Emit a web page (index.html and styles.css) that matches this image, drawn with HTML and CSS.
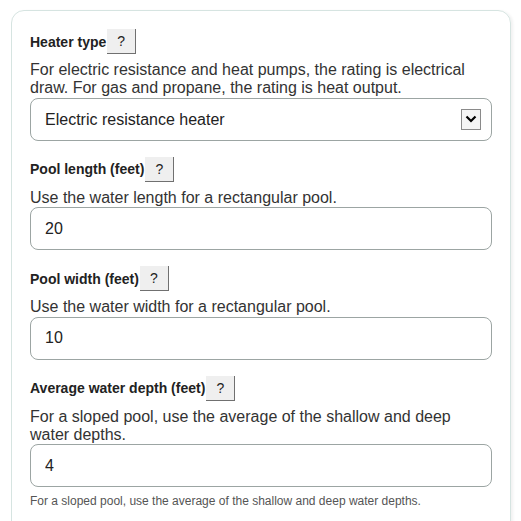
FILE: index.html
```html
<!DOCTYPE html>
<html lang="en">
<head>
  <meta charset="UTF-8" />
  <meta name="viewport" content="width=device-width, initial-scale=1" />
  <title>Pool Heater Calculator</title>
  <link rel="stylesheet" href="styles.css">
</head>
<body>
  <div class="card">
    <div class="field">
      <div class="label-row">
        <label for="heaterType">Heater type</label>
        <button class="help-btn" type="button">?</button>
      </div>
      <p class="desc">For electric resistance and heat pumps, the rating is electrical draw. For gas and propane, the rating is heat output.</p>
      <div class="select-wrap">
        <select id="heaterType" class="input">
          <option>Electric resistance heater</option>
          <option>Heat pump</option>
          <option>Natural gas heater</option>
          <option>Propane heater</option>
        </select>
        <span class="select-arrow">
          <svg width="12" height="8" viewBox="0 0 12 8"><path d="M1.5 1.5 L6 6 L10.5 1.5" fill="none" stroke="#000" stroke-width="2.2"/></svg>
        </span>
      </div>
    </div>

    <div class="field">
      <div class="label-row">
        <label for="poolLength">Pool length (feet)</label>
        <button class="help-btn" type="button">?</button>
      </div>
      <p class="desc">Use the water length for a rectangular pool.</p>
      <input id="poolLength" class="input" type="text" value="20">
    </div>

    <div class="field">
      <div class="label-row">
        <label for="poolWidth">Pool width (feet)</label>
        <button class="help-btn" type="button">?</button>
      </div>
      <p class="desc">Use the water width for a rectangular pool.</p>
      <input id="poolWidth" class="input" type="text" value="10">
    </div>

    <div class="field">
      <div class="label-row">
        <label for="poolDepth">Average water depth (feet)</label>
        <button class="help-btn" type="button">?</button>
      </div>
      <p class="desc">For a sloped pool, use the average of the shallow and deep water depths.</p>
      <input id="poolDepth" class="input" type="text" value="4">
      <p class="note">For a sloped pool, use the average of the shallow and deep water depths.</p>
    </div>
  </div>
</body>
</html>
```

FILE: styles.css
```css
* {
  box-sizing: border-box;
}

body {
  margin: 0;
  font-family: "Liberation Sans", Arial, sans-serif;
  background: #fff;
  color: #222;
  overflow: hidden;
}

.card {
  width: 500px;
  margin: 10px 0 0 11px;
  padding: 18px 18px 12px;
  border: 1px solid #d6e4e1;
  border-radius: 13px;
  box-shadow: 2px 1px 3px rgba(0, 0, 0, 0.06);
}

.field {
  margin-bottom: 16px;
}

.label-row {
  display: flex;
  align-items: center;
  height: 25px;
}

.label-row label {
  font-size: 14px;
  font-weight: 700;
  color: #222;
}

.help-btn {
  margin-left: 1px;
  width: 29px;
  height: 25px;
  padding: 0;
  font-family: "Liberation Sans", Arial, sans-serif;
  font-size: 14px;
  color: #222;
  background: #efefef;
  border: 0;
  border-right: 1px solid #707070;
  border-bottom: 1px solid #707070;
  border-radius: 0;
}

.desc {
  margin: 7px 0 0;
  font-size: 16px;
  line-height: 18.4px;
  color: #333;
}

.input {
  display: block;
  width: 100%;
  height: 43px;
  padding: 0 14px;
  font-family: "Liberation Sans", Arial, sans-serif;
  font-size: 16px;
  color: #222;
  background: #fff;
  border: 1px solid #9ca5a3;
  border-radius: 8px;
  outline: none;
  appearance: none;
  -webkit-appearance: none;
}

.select-wrap {
  position: relative;
}

.select-arrow {
  position: absolute;
  top: 11px;
  right: 11px;
  width: 20px;
  height: 21px;
  display: flex;
  align-items: center;
  justify-content: center;
  background: #f4f4f4;
  border: 1px solid #8a8a8a;
  pointer-events: none;
}

.note {
  margin: 7px 0 0;
  font-size: 12px;
  color: #555;
}
```
